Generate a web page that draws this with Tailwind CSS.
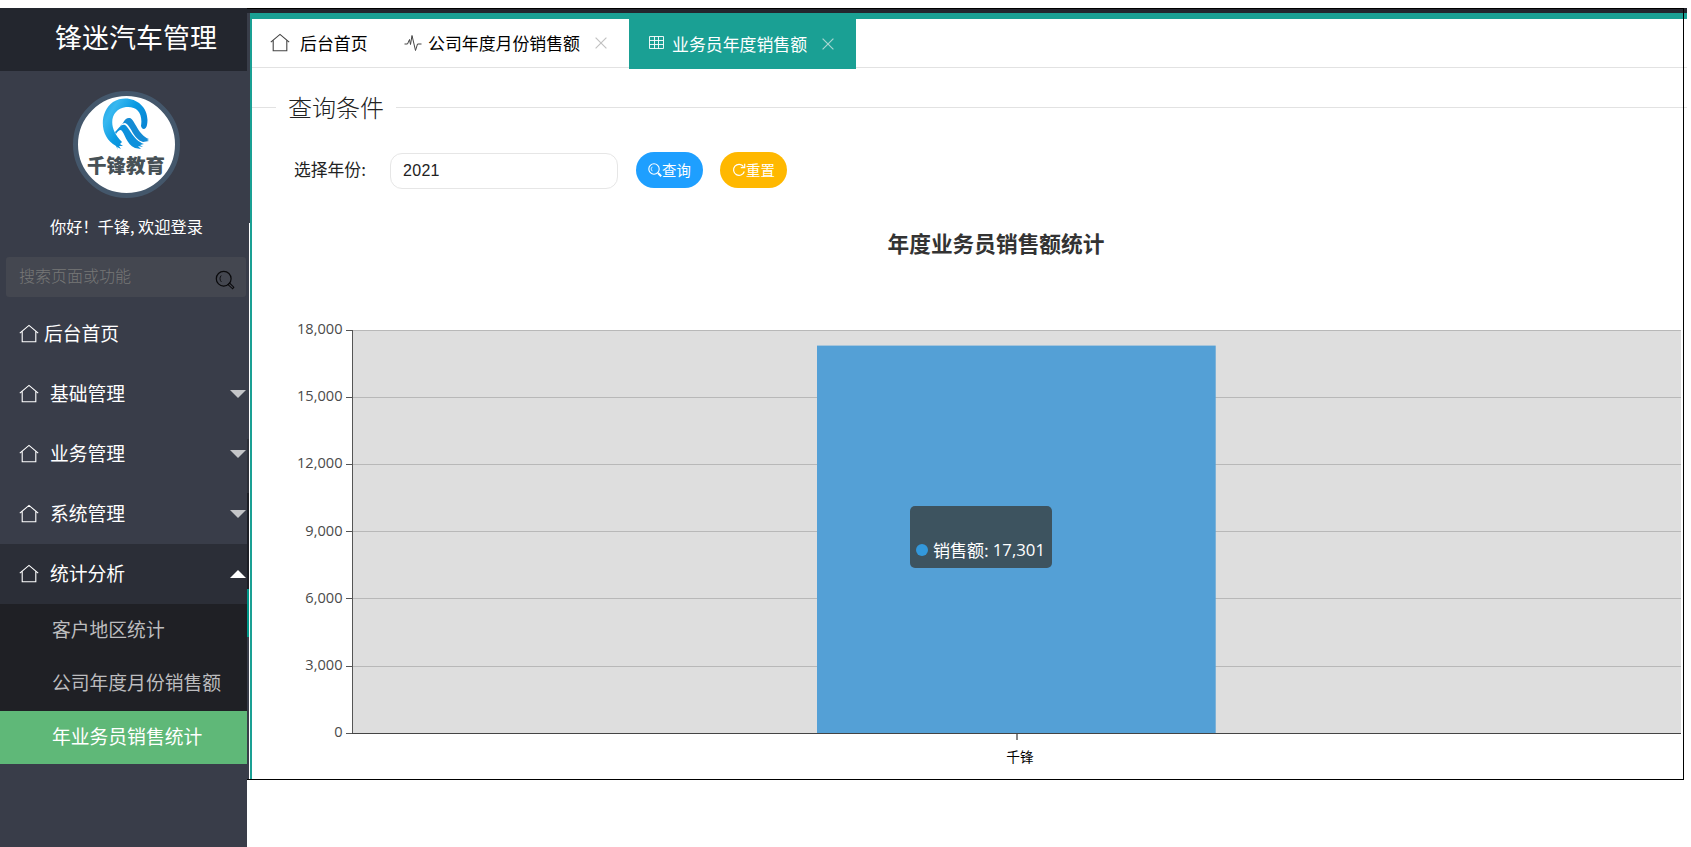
<!DOCTYPE html>
<html lang="zh-CN">
<head>
<meta charset="utf-8">
<title>锋迷汽车管理</title>
<script src="https://cdn.jsdelivr.net/npm/@tailwindcss/browser@4"></script>
</head>
<body class="bg-white w-[1691px] h-[847px] overflow-hidden font-['Noto_Sans_CJK_SC','Open_Sans',sans-serif] font-normal">
<svg class="hidden">
  <symbol id="home" viewBox="0 0 20 20"><path d="M.8 9.2 10 1.4l9.2 7.8M3.2 7.5v10.2h13.6V7.5" fill="none" stroke="currentColor" stroke-width="1.1"/></symbol>
  <symbol id="search" viewBox="0 0 20 20"><g fill="none" stroke="currentColor"><circle cx="8.7" cy="8.7" r="7.4" stroke-width="1.2"/><path d="M6.2 5.5a4.6 4.6 0 0 0 .2 6.4" stroke-width=".9"/><path d="m13 14.6 1.6-1.6 4.2 4.2-1.2 1.6z" stroke-width="1.1"/></g></symbol>
  <symbol id="close" viewBox="0 0 12 12"><path d="m.6.6 10.8 10.8M11.4.6.6 11.4" fill="none" stroke="currentColor" stroke-width="1.2"/></symbol>
</svg>
<div class="flex pt-2 h-full">
  <aside class="w-[247px] shrink-0 bg-[#393d49] text-white flex flex-col">
    <header class="h-[63px] bg-[#23262e] pl-[55px] pb-[7px] flex items-center text-[27px] whitespace-nowrap leading-none">锋迷汽车管理</header>
    <div class="pt-5 pl-[73px]">
      <div class="size-[107px] rounded-full border-5 border-[#44576b] bg-white">
        <svg class="size-[97px]" viewBox="0 0 97 97">
          <defs>
            <linearGradient id="g" x1="0" y1="0" x2="1" y2=".7"><stop offset="0" stop-color="#1b9be0"/><stop offset=".25" stop-color="#38b8f0"/><stop offset=".55" stop-color="#0a9ae2"/><stop offset="1" stop-color="#0a80d0"/></linearGradient>
          </defs>
          <path d="M40 54 38 50C22 42 20 17 35 6 51-4 73 8 69 29 68 34 64 34 63 30 65 17 59 10 48 11 32 13 29 32 44 46L42 48 45 50 41 50 43 53 39 51z" fill="url(#g)"/>
          <path d="M42 30C46 28 46 21 52 22 57 24 60 39 71 43L69 44 71 45 65 46C55 43 53 29 47 27 45 27 43 29 42 30z" fill="#148bd4"/>
          <path d="M37 36C42 31 43 28 47 29 51 31 55 44 66 48L62 49 65 51 60 50 63 53 57 52C48 48 47 37 43 34 41 34 39 36 38 38z" fill="#0c90dc"/>
          <text x="48" y="77" text-anchor="middle" font-size="19.500" font-weight="900" fill="#475156">千锋教育</text>
        </svg>
      </div>
    </div>
    <p class="mt-[12px] h-[32px] ml-[50px] text-[16.2px] leading-[32px] whitespace-nowrap">你好！<span class="-ml-px">千锋, 欢迎登录</span></p>
    <div class="mt-[15px] ml-[6px] w-[240px] h-10 rounded-[3px] bg-[#444750] flex items-center justify-between pl-[13px] pr-[11px] text-base text-[#777777] font-light">
      <span class="leading-none pb-[4px]">搜索页面或功能</span>
      <svg class="size-5 text-[#0a0a0c] mt-[6px]"><use href="#search"/></svg>
    </div>
    <nav class="mt-[7px] text-[18.8px] whitespace-nowrap">
      <div class="h-[60px] flex items-center pl-[19px]"><svg class="size-5"><use href="#home"/></svg><span class="ml-[5px] pb-[2px]">后台首页</span></div>
      <div class="h-[60px] flex items-center pl-[19px]"><svg class="size-5"><use href="#home"/></svg><span class="ml-[11px] pb-[2px]">基础管理</span><i class="ml-auto mr-px border-x-8 border-t-8 border-x-transparent border-t-[#c4c5c8]"></i></div>
      <div class="h-[60px] flex items-center pl-[19px]"><svg class="size-5"><use href="#home"/></svg><span class="ml-[11px] pb-[2px]">业务管理</span><i class="ml-auto mr-px border-x-8 border-t-8 border-x-transparent border-t-[#c4c5c8]"></i></div>
      <div class="h-[60px] flex items-center pl-[19px]"><svg class="size-5"><use href="#home"/></svg><span class="ml-[11px] pb-[2px]">系统管理</span><i class="ml-auto mr-px border-x-8 border-t-8 border-x-transparent border-t-[#c4c5c8]"></i></div>
      <div class="h-[60px] flex items-center pl-[19px] bg-[#2b2e37]"><svg class="size-5"><use href="#home"/></svg><span class="ml-[11px] pb-[2px]">统计分析</span><i class="ml-auto mr-px border-x-8 border-b-8 border-x-transparent border-b-white"></i></div>
      <div class="bg-[#1f2025] text-[#bcbcbe]">
        <div class="h-[53px] pl-[52px] leading-[49px]">客户地区统计</div>
        <div class="h-[54px] pl-[52px] leading-[50px]">公司年度月份销售额</div>
        <div class="h-[53px] pl-[52px] leading-[49px] bg-[#5fb878] text-white">年业务员销售统计</div>
      </div>
    </nav>
  </aside>

  <div class="relative w-[1440px] h-[772px]">
    <div class="h-[5px] bg-[#23262e]"></div>
    <div class="flex h-[766px]">
      <div class="w-[2px] bg-[#393d49] flex flex-col">
        <div class="mt-[426px] h-[54px] bg-[#2d3039]"></div>
        <div class="h-[96px] bg-[#1c1e25]"></div>
        <div class="h-[48px] bg-[#009688]"></div>
      </div>
      <div class="w-px bg-[#393d49] pt-[210px]"><div class="h-full bg-white"></div></div>
      <main class="flex-1 border-l-2 border-t-6 border-[#1aa094] bg-white text-black">
        <div class="h-[49px] border-b border-[#e2e2e2] flex text-[16.9px] leading-[48px] whitespace-nowrap">
          <div class="w-[137px] pl-[18px] flex items-center"><svg class="size-5 text-[#444444] -mt-px"><use href="#home"/></svg><span class="ml-[10px]">后台首页</span></div>
          <div class="w-[240px] pl-[15px] flex items-center"><svg class="w-[18px] h-[18px] -mt-px" viewBox="0 0 18 18"><path d="M.5 10H3.500L5.500 5.500 6.500 10.500 8 1.500 11.500 16.500 13.500 10H17.500" fill="none" stroke="#444444"/></svg><span class="ml-[6px]">公司年度月份销售额</span><svg class="size-3 ml-[15px] text-[#c2c2c2]"><use href="#close"/></svg></div>
          <div class="w-[227px] h-[50px] bg-[#1aa094] text-white pl-[20px] pb-px flex items-center"><svg class="w-[15px] h-[13px] -mt-[2px]" viewBox="0 0 15 13"><path d="M.5.500H14.500V12.500H.5zM.5 4.500H14.500M.5 8.500H14.500M5.500.500V12.500M9.500.500V12.500" fill="none" stroke="#ffffff" stroke-opacity=".9"/></svg><span class="ml-[8px]">业务员年度销售额</span><svg class="size-3 ml-[15px] text-[#a9d6d1]"><use href="#close"/></svg></div>
        </div>
        <div class="mt-[21px] h-[36px] flex items-center text-2xl text-[#222222]">
          <div class="w-[24px] h-px bg-[#e2e2e2]"></div><h2 class="w-[120px] text-center leading-9 font-light">查询条件</h2><div class="flex-1 h-px bg-[#e2e2e2]"></div>
        </div>
        <div class="mt-[27px] h-[37px] flex items-start whitespace-nowrap">
          <label class="w-[138px] pl-[42px] text-[16.8px] leading-[34px] text-[#222222]">选择年份:</label>
          <div class="w-[228px] h-[36px] mt-px border border-[#e6e6e6] rounded-[12px] pl-[12px] text-base leading-[34px] font-['Liberation_Sans'] text-[#222222] tracking-[0.3px]">2021</div>
          <div class="ml-[18px] w-[67px] h-[36px] rounded-full bg-[#1e9fff] text-white text-[14.4px] flex items-center justify-center pb-px"><svg class="size-[14px] stroke-[.4]" viewBox="0 0 14 14"><g fill="none" stroke="#ffffff"><circle cx="6" cy="6" r="5.200" stroke-width="1.100"/><path d="M4.200 3.800A3 3 0 0 0 4.200 8.200" stroke-width=".8"/><path d="m10 10 3.200 3.200" stroke-width="2"/></g></svg>查询</div>
          <div class="ml-[17px] w-[67px] h-[36px] rounded-full bg-[#ffb800] text-white text-[14.4px] flex items-center justify-center pb-px"><svg class="size-[14px]" viewBox="0 0 14 14"><path d="M12.300 8.500A5.500 5.500 0 1 1 11.500 3.600M12.700.8V4.700H8.800" fill="none" stroke="#ffffff" stroke-width="1.200"/></svg>重置</div>
        </div>
        <svg class="block w-[1431px] h-[589px]" viewBox="252 189 1431 589">
          <rect x="352" y="330" width="1329" height="403" fill="#dedede"/>
          <path d="M352 330.500H1681M352 397.500H1681M352 464.500H1681M352 531.500H1681M352 598.500H1681M352 666.500H1681" stroke="#b8b8b8"/>
          <path d="M352.500 330V733M346 330.500H352M346 397.500H352M346 464.500H352M346 531.500H352M346 598.500H352M346 666.500H352M346 733.500H352" stroke="#555555"/>
          <path d="M352 733.500H1681" stroke="#444444"/>
          <rect x="817" y="345.600" width="398.700" height="387.400" fill="#54a0d6"/>
          <path d="M1017 734V740" stroke="#888888" stroke-width="2"/>
          <g font-family="Open Sans" font-weight="400" font-size="14.600" fill="#4a4a4a" text-anchor="end">
            <text x="342.500" y="334">18,000</text><text x="342.500" y="401">15,000</text><text x="342.500" y="468">12,000</text><text x="342.500" y="536">9,000</text><text x="342.500" y="603">6,000</text><text x="342.500" y="670">3,000</text><text x="342.500" y="737">0</text>
          </g>
          <text x="1020" y="761.500" font-size="13.700" font-weight="400" text-anchor="middle" fill="#000000">千锋</text>
          <text x="996" y="251.500" font-size="21.700" font-weight="700" text-anchor="middle" fill="#333333">年度业务员销售额统计</text>
        </svg>
      </main>
    </div>
    <div class="absolute inset-y-0 left-0 w-[1437px] border-t border-r border-b border-black"></div>
    <div class="absolute left-[663px] top-[498px] w-[142px] h-[62px] rounded-[5px] bg-[#3d535f] text-white flex items-end pl-[6px] pb-[6px] text-[17px] leading-6 whitespace-nowrap">
      <i class="size-3 rounded-full bg-[#3398db] mb-[6px] mr-[5px]"></i><span>销售额:</span><span class="ml-[4px] font-['Open_Sans'] text-[16.8px]">17,301</span>
    </div>
  </div>
</div>
</body>
</html>
